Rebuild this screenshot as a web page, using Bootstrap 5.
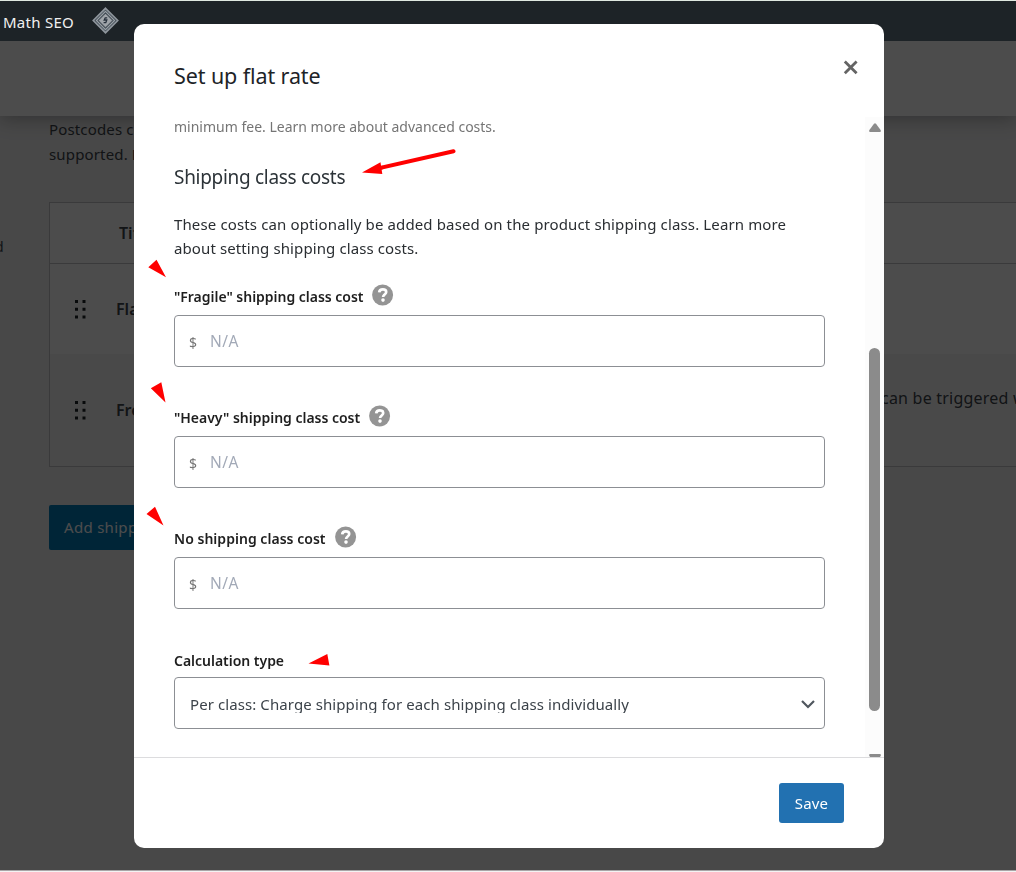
<!DOCTYPE html>
<html lang="en">
<head>
<meta charset="utf-8">
<meta name="viewport" content="width=device-width, initial-scale=1">
<title>Set up flat rate</title>
<link href="https://cdn.jsdelivr.net/npm/bootstrap@5.3.0/dist/css/bootstrap.min.css" rel="stylesheet">
<style>
  body{font-family:"Noto Sans","Open Sans",sans-serif;font-size:15px;color:#3c434a;background:#f0f0f1;height:872px;overflow:hidden}
  .window-edge{height:1px;background:#dfe8e0;z-index:1060}
  .admin-bar{height:40px;background:#1d2327;color:#f0f0f1;z-index:1060;padding:0 0 0 3px;letter-spacing:.26px;gap:18px}
  .admin-bar span{margin-top:2px}
  .admin-bar svg{margin-top:-1px}
  .page-head{height:75px;background:#fff;box-shadow:0 3px 18px rgba(0,0,0,.3)}
  .page-body{padding-left:49px}
  .side-note{width:49px;margin:0 0 -143px -49px;padding-top:118px;height:143px;line-height:26px;font-size:14px;text-indent:-5px}
  .help-copy{line-height:25px;padding-top:1px;letter-spacing:.15px;white-space:nowrap}
  .zone-table{border:1px solid #c3c4c7;border-right:0;margin-top:35px;background:#fff;height:265px;font-weight:600;font-size:16px;white-space:nowrap}
  .zone-head{height:61px;border-bottom:1px solid #c3c4c7;padding-left:69px}
  .zone-row{height:90px;padding-left:25px}
  .zone-row svg{flex:none}
  .zone-row.alt{height:112px;background:#f6f6f6}
  .zone-name{width:770px;margin-left:30px;flex:none}
  .zone-desc{font-weight:400;letter-spacing:.22px;margin:-25px 0 0 -5px;flex:none}
  .add-btn{width:170px;height:45px;margin-top:38px;border-radius:2px;background:#007cba;color:#fff;padding:0 15px;letter-spacing:.3px}
  .dim{background:rgba(0,0,0,.7);z-index:1050}
  .window-foot{z-index:1070;height:2px;background:#f3f3f3;border-top:1px solid #a9a5a7}
  .modal-layer{z-index:1065;padding:24px 0 0 134px}
  .rate-modal{width:750px;height:824px;border:0;border-radius:10px;background:#fff}
  .rate-modal .modal-header{height:93px;padding:0 25px 0 40px;border:0;align-items:flex-start}
  .rate-modal .modal-title{font-size:21.5px;line-height:30px;font-weight:400;color:#1d2327;letter-spacing:-.1px;margin-top:37px}
  .close-x{margin-top:35px}
  .rate-modal .modal-body{padding:0 0 0 40px;overflow:hidden;height:640px;flex:none;color:#2a2e32}
  .pane{width:651px}
  .hint{font-size:14px;line-height:20px;color:#757575;margin:0}
  .class-title{font-size:19px;line-height:28px;font-weight:400;margin:26px 0 0;letter-spacing:-.3px;color:#2c3338}
  .intro{line-height:24px;margin:21px 0 24px;white-space:nowrap}
  .intro .first{letter-spacing:.131px}
  .intro .second{letter-spacing:.1px}
  .field{margin-bottom:38px}
  .field-label{height:22px;gap:9px;margin-bottom:9px}
  .field-label label{font-size:14px;font-weight:600;line-height:25px;color:#1e1e1e;white-space:nowrap;letter-spacing:-.02px}
  .field-label label[for=none]{letter-spacing:.03px}
  .field-box{height:52px;border:1px solid #8c8f94;border-radius:4px;background:#fff}
  .field-box .unit{padding:3px 0 0 14px;width:35px;flex:none;color:#757575;font-size:14px}
  .field-box .form-control{border:0;padding:2px 0 0;background:none;font-size:15.5px;letter-spacing:.5px;box-shadow:none}
  .field-box .form-control::placeholder{color:#a2a9b7}
  .choice{padding:0 9px 0 15px}
  .choice span{letter-spacing:.085px;height:20px;line-height:22px;margin-top:-1px;overflow:hidden;color:#3c434a;white-space:nowrap}
  .choice svg{margin-top:2px}
  .calc-label{height:30px;padding-top:1px}
  .scroll-track{width:19px;background:#fcfcfc}
  .arrow-up{margin-top:6px}
  .arrow-down{margin-top:43px}
  .thumb{width:11px;height:363px;border-radius:6px;background:#8b8b8b;margin-top:216px}
  .rate-modal .modal-footer{height:91px;border-top:1px solid #dcdcde;padding:0 40px 0 0;align-items:center}
  .save-btn{width:65px;height:40px;border-radius:3px;background:#2271b1;color:#fff;font-size:15px;padding:0;letter-spacing:.2px}
</style>
</head>
<body>
<div class="window-edge position-relative"></div>
<nav class="admin-bar position-relative d-flex align-items-center">
  <span>Math SEO</span>
  <svg width="27" height="27" viewBox="0 0 27 27" fill="none" stroke="#8e959c">
    <path d="M13.5 1.3 25.7 13.5 13.5 25.7 1.3 13.5Z" fill="#3d4750" stroke-width="1.7"/>
    <path d="M13.5 4.4 22.6 13.5 13.5 22.6 4.4 13.5Z" stroke="#9aa1a7" stroke-width="1.2"/>
    <path d="M13.5 7.2 19.8 13.5 13.5 19.8 7.2 13.5Z" fill="#a0a5aa" stroke="#a0a5aa"/>
    <path d="M15.2 10.8h-2l-1 2.2h2.6l-1 2.7h-2.2" stroke="#27313c" stroke-width="1.3"/>
  </svg>
</nav>
<header class="page-head position-relative"></header>

<main class="page-body">
  <div class="side-note">d</div>
  <div class="help-copy"><div>Postcodes can</div><div>supported. Please</div></div>
  <div class="zone-table">
    <div class="zone-head d-flex align-items-center">Title</div>
    <div class="zone-row d-flex align-items-center">
      <svg width="11" height="19" viewBox="0 0 11 19" fill="#1d2327"><path d="M0 0h3v3H0zM7.5 0h3v3h-3zM0 7.8h3v3H0zM7.5 7.8h3v3h-3zM0 15.5h3v3H0zM7.5 15.5h3v3h-3z"/></svg>
      <span class="zone-name">Flat rate</span>
    </div>
    <div class="zone-row alt d-flex align-items-center">
      <svg width="11" height="19" viewBox="0 0 11 19" fill="#1d2327"><path d="M0 0h3v3H0zM7.5 0h3v3h-3zM0 7.8h3v3H0zM7.5 7.8h3v3h-3zM0 15.5h3v3H0zM7.5 15.5h3v3h-3z"/></svg>
      <span class="zone-name">Free</span>
      <span class="zone-desc">can be triggered with</span>
    </div>
  </div>
  <div class="add-btn d-flex align-items-center text-nowrap">Add shipping</div>
</main>

<div class="dim position-fixed top-0 start-0 w-100 h-100"></div>
<div class="window-foot position-fixed bottom-0 start-0 w-100"></div>

<div class="modal-layer position-fixed top-0 start-0 w-100 h-100">
  <div class="modal-content rate-modal">
    <div class="modal-header">
      <h1 class="modal-title">Set up flat rate</h1>
      <svg class="close-x" width="17" height="17" viewBox="0 0 17 17" stroke="#646464" stroke-width="2.8"><path d="M2.8 2.4 14.6 14.2M14.6 2.4 2.8 14.2"/></svg>
    </div>
    <div class="modal-body d-flex justify-content-between">
      <div class="pane">
        <p class="hint">minimum fee. Learn more about advanced costs.</p>
        <h2 class="class-title">Shipping class costs</h2>
        <p class="intro"><span class="first">These costs can optionally be added based on the product shipping class. Learn more</span><br><span class="second">about setting shipping class costs.</span></p>

        <div class="field">
          <div class="field-label d-flex"><label for="fragile">"Fragile" shipping class cost</label>
            <svg width="22" height="22" viewBox="0 0 22 22"><circle cx="10.6" cy="11" r="10.5" fill="#949494"/><path d="M7.2 8.3C7.4 6.3 8.8 5.3 10.8 5.3c2 0 3.4 1 3.4 2.8 0 2.5-3.1 2.4-3.1 5" fill="none" stroke="#fff" stroke-width="2.7"/><circle cx="11" cy="16.1" r="1.8" fill="#fff"/></svg>
          </div>
          <div class="field-box d-flex align-items-center"><span class="unit">$</span><input class="form-control" id="fragile" placeholder="N/A"></div>
        </div>
        <div class="field">
          <div class="field-label d-flex"><label for="heavy">"Heavy" shipping class cost</label>
            <svg width="22" height="22" viewBox="0 0 22 22"><circle cx="10.6" cy="11" r="10.5" fill="#949494"/><path d="M7.2 8.3C7.4 6.3 8.8 5.3 10.8 5.3c2 0 3.4 1 3.4 2.8 0 2.5-3.1 2.4-3.1 5" fill="none" stroke="#fff" stroke-width="2.7"/><circle cx="11" cy="16.1" r="1.8" fill="#fff"/></svg>
          </div>
          <div class="field-box d-flex align-items-center"><span class="unit">$</span><input class="form-control" id="heavy" placeholder="N/A"></div>
        </div>
        <div class="field">
          <div class="field-label d-flex"><label for="none">No shipping class cost</label>
            <svg width="22" height="22" viewBox="0 0 22 22"><circle cx="10.6" cy="11" r="10.5" fill="#949494"/><path d="M7.2 8.3C7.4 6.3 8.8 5.3 10.8 5.3c2 0 3.4 1 3.4 2.8 0 2.5-3.1 2.4-3.1 5" fill="none" stroke="#fff" stroke-width="2.7"/><circle cx="11" cy="16.1" r="1.8" fill="#fff"/></svg>
          </div>
          <div class="field-box d-flex align-items-center"><span class="unit">$</span><input class="form-control" id="none" placeholder="N/A"></div>
        </div>
        <div class="field">
          <div class="field-label calc-label d-flex mb-0"><label>Calculation type</label></div>
          <div class="field-box choice d-flex align-items-center justify-content-between">
            <span>Per class: Charge shipping for each shipping class individually</span>
            <svg width="14" height="10" viewBox="0 0 14 10" fill="none" stroke="#50575e" stroke-width="2.2"><path d="M1 2 7 8l6-6"/></svg>
          </div>
        </div>
      </div>
      <div class="scroll-track d-flex flex-column align-items-center">
        <svg width="12" height="9" viewBox="0 0 12 9" fill="#8b8b8b" class="arrow-up flex-shrink-0"><path d="M5 .8Q6-.4 7 .8L11.6 7Q12.3 8.8 11 9H1Q-.3 8.8.4 7Z"/></svg>
        <div class="thumb flex-shrink-0"></div>
        <svg width="12" height="9" viewBox="0 0 12 9" fill="#8b8b8b" class="arrow-down flex-shrink-0"><path d="M1 0h10q1.3.2.6 2L7 8.2Q6 9.4 5 8.2L.4 2Q-.3.2 1 0Z"/></svg>
      </div>
    </div>
    <div class="modal-footer"><button class="btn save-btn m-0" type="button">Save</button></div>
  </div>
  <svg class="position-absolute top-0 start-0 pe-none" width="1016" height="872" viewBox="0 0 1016 872" fill="#f00">
    <path d="M453.5 151.2 380 168" stroke="#f00" stroke-width="4" stroke-linecap="round"/>
    <path d="M362 172.5 380.5 162.3 382.3 174ZM148.3 267.3 156.5 259.8 166 277.2ZM150.8 388.3 161.3 382.3 165.5 402.5ZM146.5 514 155 506.7 163.5 525.5ZM308.5 663.4 327.3 653.9 329.4 665.6Z"/>
  </svg>
</div>
<script src="https://cdn.jsdelivr.net/npm/bootstrap@5.3.0/dist/js/bootstrap.bundle.min.js"></script>
</body>
</html>
